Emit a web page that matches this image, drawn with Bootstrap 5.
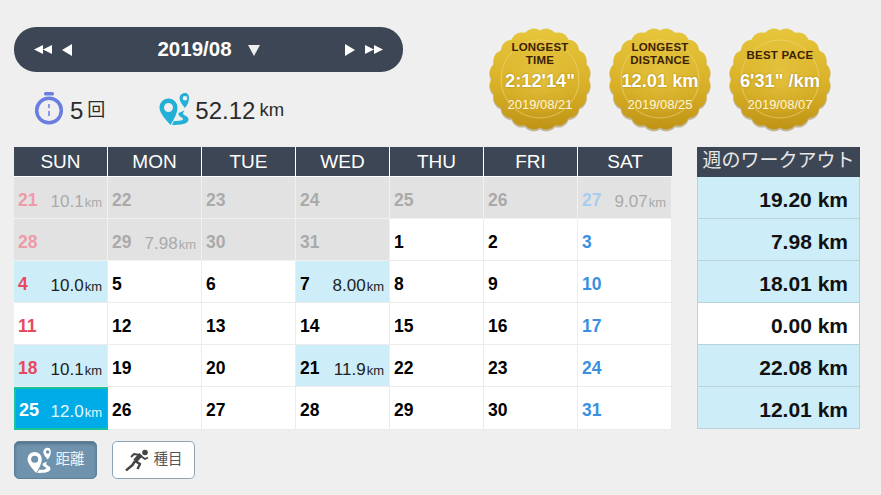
<!DOCTYPE html>
<html lang="ja">
<head>
<meta charset="UTF-8">
<title>Workout</title>
<link href="https://cdn.jsdelivr.net/npm/bootstrap@5.3.0/dist/css/bootstrap.min.css" rel="stylesheet">
<style>
body { background: #efefef; font-family: "Liberation Sans", "Noto Sans CJK JP", sans-serif; color: #222; }
.page-wrap { width: 881px; height: 495px; padding: 27px 21px 0 14px; overflow: hidden; }
.top-area { height: 120px; }
.left-top { width: 389px; }
.month-pill { height: 45px; background: #3d4654; border-radius: 22px; color: #fff; padding: 0 20px; }
.month-pill .mtxt { font-size: 20.5px; font-weight: 700; }
.nav-arrows { gap: 10px; }
.stat-row { margin-top: 20px; padding-left: 21px; height: 33px; }
.stat-num { font-size: 24px; line-height: 1; color: #2b2b2b; padding-top: 4px; margin-left: 7px; }
.stat-num.dist-num { margin-left: 6px; }
.stat-unit { font-size: 18px; color: #2b2b2b; padding-top: 3px; }
.stat-unit.km-unit { font-size: 18.5px; }
.stat-gap { margin-left: 54px; }
.medals { margin-left: 86px; gap: 18px; }
.medal-box { width: 102px; height: 106px; position: relative; text-align: center; color: #fff; flex: none; }
.medal-box svg { position: absolute; left: 0; top: 0; }
.medal-text { position: relative; padding-top: 14px; height: 100%; }
.medal-title { font-size: 11.5px; line-height: 13px; letter-spacing: .2px; font-weight: 700; color: #3d1f05; height: 26px; display: flex; align-items: center; justify-content: center; }
.medal-title.single-line { padding-top: 3px; }
.medal-val { font-size: 18.3px; line-height: 20px; font-weight: 700; margin-top: 4px; text-shadow: 0 0 2px #a07c10; white-space: nowrap; }
.medal-date { font-size: 13px; line-height: 14px; margin-top: 7px; color: #fff6d8; }
.cal-wrap { width: 658px; }
.week-wrap { width: 163px; margin-left: 25px; }
.cal-head, .cal-row { display: grid; grid-template-columns: repeat(7, 94px); }
.cal-head div { height: 30px; background: #3d4654; color: #fff; text-align: center; font-size: 19px; line-height: 29px; border-right: 1px solid #fff; border-bottom: 1px solid #fff; }
.cal-head div:last-child { border-right: 0; }
.cal-cell { height: 42px; background: #fff; border-right: 1px solid #ececec; border-bottom: 1px solid #ececec; padding: 5px 5px 0 4px; display: flex; align-items: center; justify-content: space-between; font-size: 17.5px; font-weight: 700; color: #000; }
.cal-row:last-child .cal-cell { height: 43px; }
.cal-cell .km { font-size: 17px; font-weight: 400; color: #222; padding-top: 4px; }
.cal-cell .km small { font-size: 13px; margin-left: 1px; }
.cal-cell.sun { color: #e9485f; }
.cal-cell.sat { color: #3a8fe0; }
.cal-cell.other { background: #e2e2e2; color: #aaa; border-color: #f0f0f0; }
.cal-cell.other .km { color: #aaa; }
.cal-cell.other.sun { color: #ef9aa8; }
.cal-cell.other.sat { color: #a8cdf0; }
.cal-cell.done { background: #cdedf8; }
.cal-cell.today { background: #00ace8; color: #fff; border: 2px solid #19c39b; border-right: 1px solid #19c39b; padding: 3px 5px 0 3px; font-size: 18px; }
.cal-cell.today .km { color: #e4f7ff; }
.week-head { height: 30px; background: #3d4654; color: #e8e8e8; font-size: 19px; line-height: 28px; text-align: center; white-space: nowrap; }
.week-cell { height: 42px; background: #cdedf8; border: 1px solid #b8d3dc; border-top: 0; text-align: right; padding-right: 11px; padding-top: 5px; font-size: 21px; line-height: 36px; font-weight: 700; color: #111; }
.week-cell.zero { background: #fff; }
.mode-row { margin-top: 11px; gap: 15px; }
.mode-btn { width: 83px; height: 38px; border-radius: 5px; font-size: 14.5px; display: flex; align-items: center; justify-content: center; gap: 5px; padding: 0; }
.mode-btn.on { background: #6f93ad; color: #eef3f6; border: 1px solid #5f8097; box-shadow: inset 0 2px 3px #55738a; }
.mode-btn.off { background: #fff; color: #555; border: 1px solid #8ea4b5; }
</style>
</head>
<body>
<svg width="0" height="0" class="position-absolute">
  <defs>
    <linearGradient id="gold" x1="0" y1="0" x2="0" y2="1"><stop offset="0" stop-color="#e6c63c"/><stop offset=".55" stop-color="#d9b128"/><stop offset="1" stop-color="#c09315"/></linearGradient>
    <radialGradient id="goldIn" cx=".5" cy=".45" r=".55"><stop offset="0" stop-color="#e8c94a" stop-opacity=".7"/><stop offset="1" stop-color="#e0bc34" stop-opacity="0"/></radialGradient>
    <symbol id="medalShape" viewBox="0 0 102 106">
      <path class="scallop" transform="translate(0 2)" fill="#8f7430" opacity=".45"/>
      <path class="scallop" fill="url(#gold)"/>
      <circle cx="51" cy="52" r="41" fill="url(#goldIn)"/>
      <circle cx="51" cy="52" r="39" fill="none" stroke="#efdc85" stroke-width="1" opacity=".55"/>
    </symbol>
    <symbol id="pinRoute" viewBox="0 0 30 33">
      <path fill-rule="evenodd" d="M9.500 6.500C4.500 6.500.5 10.500.5 15.500c0 5 5 11 11 17.500l1-1.500C15 27 18.500 21 18.500 15.500c0-5-4-9-9-9Zm0 4.500a4.500 4.500 0 1 1 0 9 4.500 4.500 0 0 1 0-9Z"/>
      <path fill-rule="evenodd" d="M26 1c-3 0-5.500 2.300-5.500 5.200 0 2.800 2.800 6.300 5.500 9.800 2.700-3.500 4-7 4-9.800C30 3.300 29 1 26 1Zm0 3a2.300 2.300 0 1 1 0 4.600 2.300 2.300 0 0 1 0-4.600Z"/>
      <path d="M13 33c8 0 17-.5 16.500-6-.5-3.500-5.500-3-5.500-6l1.500-2.500-6 2.500c-1 4 5 4 4.500 6.500-.5 1-6 1.500-9 1.500Z"/>
    </symbol>
  </defs>
</svg>
<div class="page-wrap">
  <div class="d-flex top-area">
    <div class="left-top">
      <div class="month-pill d-flex align-items-center justify-content-between">
        <div class="d-flex nav-arrows align-items-center">
          <svg width="18" height="11" viewBox="0 0 18 11" fill="#fff"><path d="M0 5.500 9 1V10Z M9 5.500 18 1V10Z"/></svg>
          <svg width="10" height="12" viewBox="0 0 10 12" fill="#fff"><path d="M0 6 10 0V12Z"/></svg>
        </div>
        <div class="d-flex align-items-center">
          <span class="mtxt">2019/08</span>
          <svg class="ms-3" width="12" height="12" viewBox="0 0 12 12" fill="#eee"><path d="M0 1H12L6 12Z"/></svg>
        </div>
        <div class="d-flex nav-arrows align-items-center">
          <svg width="10" height="12" viewBox="0 0 10 12" fill="#fff"><path d="M10 6 0 0V12Z"/></svg>
          <svg width="18" height="11" viewBox="0 0 18 11" fill="#fff"><path d="M9 5.500 0 1V10Z M18 5.500 9 1V10Z"/></svg>
        </div>
      </div>
      <div class="stat-row d-flex align-items-center">
        <svg width="28" height="33" viewBox="0 0 28 33"><rect x="9" y="0" width="10" height="3.500" rx="1.500" fill="#6a7de0"/><circle cx="14" cy="18.500" r="12.300" fill="none" stroke="#6a7de0" stroke-width="3.500"/><path d="M14 12v4M14 19v5" stroke="#6a7de0" stroke-width="1.500"/></svg>
        <span class="stat-num">5</span><span class="stat-unit ms-1">回</span>
        <svg class="stat-gap" width="30" height="33" fill="#22b0d8"><use href="#pinRoute"/></svg>
        <span class="stat-num dist-num">52.12</span><span class="stat-unit km-unit ms-1">km</span>
      </div>
    </div>
    <div class="d-flex medals">
      <div class="medal-box">
        <svg width="102" height="106"><use href="#medalShape"/></svg>
        <div class="medal-text"><div class="medal-title">LONGEST<br>TIME</div><div class="medal-val">2:12'14"</div><div class="medal-date">2019/08/21</div></div>
      </div>
      <div class="medal-box">
        <svg width="102" height="106"><use href="#medalShape"/></svg>
        <div class="medal-text"><div class="medal-title">LONGEST<br>DISTANCE</div><div class="medal-val">12.01 km</div><div class="medal-date">2019/08/25</div></div>
      </div>
      <div class="medal-box">
        <svg width="102" height="106"><use href="#medalShape"/></svg>
        <div class="medal-text"><div class="medal-title single-line">BEST PACE</div><div class="medal-val">6'31" /km</div><div class="medal-date">2019/08/07</div></div>
      </div>
    </div>
  </div>

  <div class="d-flex">
    <div class="cal-wrap">
      <div class="cal-head"><div>SUN</div><div>MON</div><div>TUE</div><div>WED</div><div>THU</div><div>FRI</div><div>SAT</div></div>
      <div class="cal-row">
        <div class="cal-cell other sun"><span>21</span><span class="km">10.1<small>km</small></span></div>
        <div class="cal-cell other"><span>22</span></div>
        <div class="cal-cell other"><span>23</span></div>
        <div class="cal-cell other"><span>24</span></div>
        <div class="cal-cell other"><span>25</span></div>
        <div class="cal-cell other"><span>26</span></div>
        <div class="cal-cell other sat"><span>27</span><span class="km">9.07<small>km</small></span></div>
      </div>
      <div class="cal-row">
        <div class="cal-cell other sun"><span>28</span></div>
        <div class="cal-cell other"><span>29</span><span class="km">7.98<small>km</small></span></div>
        <div class="cal-cell other"><span>30</span></div>
        <div class="cal-cell other"><span>31</span></div>
        <div class="cal-cell"><span>1</span></div>
        <div class="cal-cell"><span>2</span></div>
        <div class="cal-cell sat"><span>3</span></div>
      </div>
      <div class="cal-row">
        <div class="cal-cell sun done"><span>4</span><span class="km">10.0<small>km</small></span></div>
        <div class="cal-cell"><span>5</span></div>
        <div class="cal-cell"><span>6</span></div>
        <div class="cal-cell done"><span>7</span><span class="km">8.00<small>km</small></span></div>
        <div class="cal-cell"><span>8</span></div>
        <div class="cal-cell"><span>9</span></div>
        <div class="cal-cell sat"><span>10</span></div>
      </div>
      <div class="cal-row">
        <div class="cal-cell sun"><span>11</span></div>
        <div class="cal-cell"><span>12</span></div>
        <div class="cal-cell"><span>13</span></div>
        <div class="cal-cell"><span>14</span></div>
        <div class="cal-cell"><span>15</span></div>
        <div class="cal-cell"><span>16</span></div>
        <div class="cal-cell sat"><span>17</span></div>
      </div>
      <div class="cal-row">
        <div class="cal-cell sun done"><span>18</span><span class="km">10.1<small>km</small></span></div>
        <div class="cal-cell"><span>19</span></div>
        <div class="cal-cell"><span>20</span></div>
        <div class="cal-cell done"><span>21</span><span class="km">11.9<small>km</small></span></div>
        <div class="cal-cell"><span>22</span></div>
        <div class="cal-cell"><span>23</span></div>
        <div class="cal-cell sat"><span>24</span></div>
      </div>
      <div class="cal-row">
        <div class="cal-cell today"><span>25</span><span class="km">12.0<small>km</small></span></div>
        <div class="cal-cell"><span>26</span></div>
        <div class="cal-cell"><span>27</span></div>
        <div class="cal-cell"><span>28</span></div>
        <div class="cal-cell"><span>29</span></div>
        <div class="cal-cell"><span>30</span></div>
        <div class="cal-cell sat"><span>31</span></div>
      </div>
    </div>
    <div class="week-wrap">
      <div class="week-head">週のワークアウト</div>
      <div class="week-cell">19.20 km</div>
      <div class="week-cell">7.98 km</div>
      <div class="week-cell">18.01 km</div>
      <div class="week-cell zero">0.00 km</div>
      <div class="week-cell">22.08 km</div>
      <div class="week-cell">12.01 km</div>
    </div>
  </div>

  <div class="d-flex mode-row">
    <button type="button" class="btn mode-btn on">
      <svg width="24" height="26" fill="#fff"><use href="#pinRoute"/></svg>
      <span>距離</span>
    </button>
    <button type="button" class="btn mode-btn off">
      <svg width="24" height="22" viewBox="0 0 24 22" fill="none" stroke="#444" stroke-width="2.600" stroke-linejoin="round"><circle cx="20" cy="3.500" r="2.800" fill="#444" stroke="none"/><path d="M16 5.500 10 12" stroke-width="4.500"/><path d="M15 6.500 20 10 23 8.500M14.500 6 9 5 6 8" stroke-width="1.800"/><path d="M10 12 15 15 12.500 20M10 12 7.500 16 1 21.500" stroke-width="2.400"/></svg>
      <span>種目</span>
    </button>
  </div>
</div>
<script>
    // medal edge: 20 shallow arcs round a circle
    var n = 20, R = 48.5, d = "";
    for (var i = 0; i <= n; i++) {
        var a = i * 2 * Math.PI / n;
        var x = (51 + R * Math.cos(a)).toFixed(2), y = (52 + R * Math.sin(a)).toFixed(2);
        d += i == 0 ? "M" + x + " " + y : "A11 11 0 0 1 " + x + " " + y;
    }
    document.querySelectorAll(".scallop").forEach(function (p) { p.setAttribute("d", d + "Z"); });
</script>
</body>
</html>
